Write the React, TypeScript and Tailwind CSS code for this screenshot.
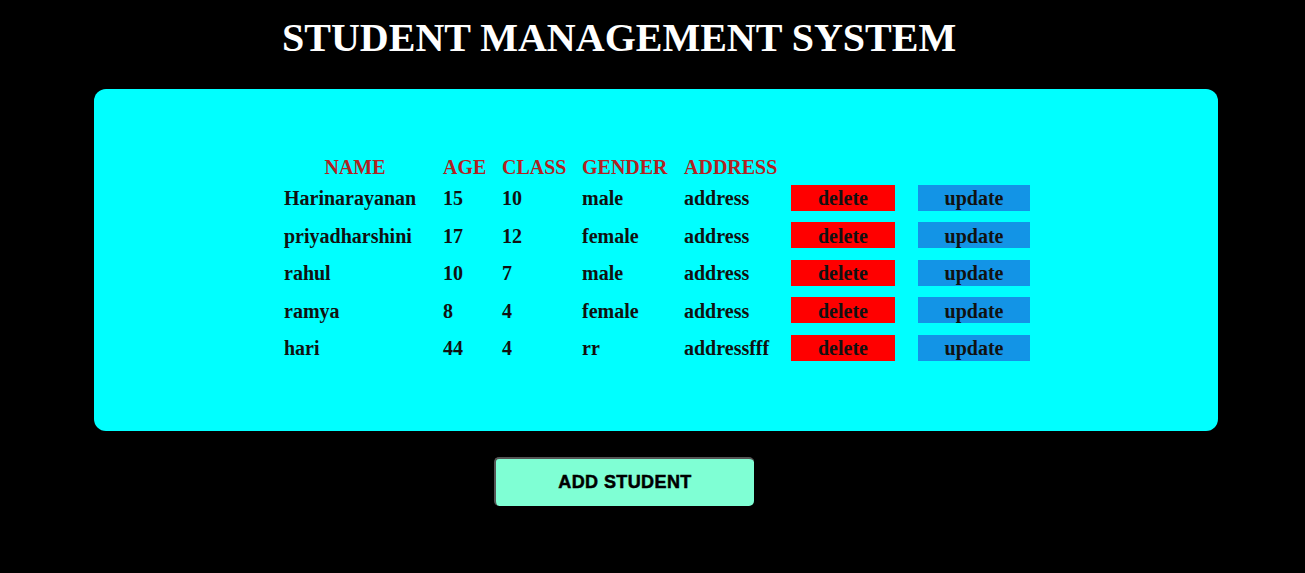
import React from "react";

const students = [
  { name: "Harinarayanan", age: "15", cls: "10", gender: "male", address: "address" },
  { name: "priyadharshini", age: "17", cls: "12", gender: "female", address: "address" },
  { name: "rahul", age: "10", cls: "7", gender: "male", address: "address" },
  { name: "ramya", age: "8", cls: "4", gender: "female", address: "address" },
  { name: "hari", age: "44", cls: "4", gender: "rr", address: "addressfff" },
];

const cols = "grid grid-cols-[159px_59px_80px_102px_107px_127px_112px]";

export default function App() {
  return (
    <div className="w-[1305px] h-[573px] bg-black overflow-hidden font-['Liberation_Serif','Times_New_Roman',serif]">
      <h1 className="pl-[282px] pt-[15px] h-[89px] text-[40px] leading-[46px] font-bold text-white">
        STUDENT MANAGEMENT SYSTEM
      </h1>
      <div className="ml-[94px] w-[1124px] h-[342px] bg-[#00ffff] rounded-[12px] pl-[190px] pt-[63px]">
        <div className={`${cols} h-[27px] items-center text-[20px] font-bold text-[#b22222]`}>
          <div className="w-[142px] text-center">NAME</div>
          <div>AGE</div>
          <div>CLASS</div>
          <div>GENDER</div>
          <div>ADDRESS</div>
          <div />
          <div />
        </div>
        {students.map((s, i) => (
          <div key={i} className={`${cols} h-[37.5px] items-center text-[20px] font-bold text-[#111]`}>
            <div className="pt-[1px]">{s.name}</div>
            <div className="pt-[1px]">{s.age}</div>
            <div className="pt-[1px]">{s.cls}</div>
            <div className="pt-[1px]">{s.gender}</div>
            <div className="pt-[1px]">{s.address}</div>
            <div>
              <div className="w-[104px] h-[26px] bg-[#ff0000] flex items-center justify-center leading-none pt-[1px]">delete</div>
            </div>
            <div>
              <div className="w-[112px] h-[26px] bg-[#1394e6] flex items-center justify-center leading-none pt-[1px]">update</div>
            </div>
          </div>
        ))}
      </div>
      <div className="pl-[494px] pt-[26px]">
        <button className="w-[260px] h-[49px] bg-[#7fffd4] rounded-[5px] border-t-2 border-l-2 border-[#555] border-r-0 border-b-0 font-['Liberation_Sans',Arial,sans-serif] font-bold text-[18px] tracking-[0.4px] [-webkit-text-stroke:0.5px_black] text-black flex items-center justify-center">
          ADD STUDENT
        </button>
      </div>
    </div>
  );
}
